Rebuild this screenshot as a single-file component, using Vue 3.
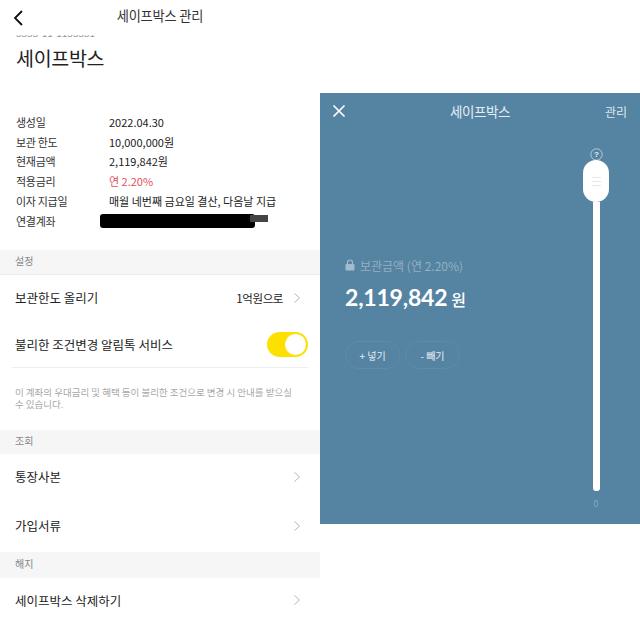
<script setup>
const infoRows = [
  { label: '생성일', value: '2022.04.30' },
  { label: '보관 한도', value: '10,000,000원' },
  { label: '현재금액', value: '2,119,842원' },
  { label: '적용금리', value: '연 2.20%', red: true },
  { label: '이자 지급일', value: '매월 네번째 금요일 결산, 다음날 지급' },
  { label: '연결계좌', hidden: true }
]
</script>

<template>
  <div class="page">
    <div class="manage">
      <div class="topbar">
        <svg class="back" width="12" height="18" viewBox="0 0 12 18" fill="none" stroke="#111" stroke-width="1.8">
          <path d="M10 2 L3 9 L10 16" />
        </svg>
        <span class="topbar-title">세이프박스 관리</span>
      </div>
      <div class="cut-number"><span>3333-11-1133331</span></div>
      <h1 class="box-title">세이프박스</h1>

      <div class="info">
        <div v-for="row in infoRows" :key="row.label" class="info-row">
          <div class="info-label">{{ row.label }}</div>
          <div v-if="row.hidden" class="scribble"></div>
          <div v-else class="info-value" :class="{ red: row.red }">{{ row.value }}</div>
        </div>
      </div>

      <div class="band band-first">설정</div>
      <div class="menu-row row-limit">
        <span>보관한도 올리기</span>
        <span class="menu-right">
          <span class="menu-value">1억원으로</span>
          <svg class="chev" width="8" height="12" viewBox="0 0 8 12" fill="none" stroke="#b5b5b5" stroke-width="1">
            <path d="M1.5 1.5 L6.5 6 L1.5 10.5" />
          </svg>
        </span>
      </div>
      <div class="menu-row row-alert">
        <span>불리한 조건변경 알림톡 서비스</span>
        <span class="toggle"><span class="knob"></span></span>
      </div>
      <div class="divider"></div>
      <p class="notice">이 계좌의 우대금리 및 혜택 등이 불리한 조건으로 변경 시 안내를 받으실<br />수 있습니다.</p>

      <div class="band">조회</div>
      <div class="menu-row row-copy">
        <span>통장사본</span>
        <svg class="chev" width="8" height="12" viewBox="0 0 8 12" fill="none" stroke="#b5b5b5" stroke-width="1">
          <path d="M1.5 1.5 L6.5 6 L1.5 10.5" />
        </svg>
      </div>
      <div class="menu-row row-docs">
        <span>가입서류</span>
        <svg class="chev" width="8" height="12" viewBox="0 0 8 12" fill="none" stroke="#b5b5b5" stroke-width="1">
          <path d="M1.5 1.5 L6.5 6 L1.5 10.5" />
        </svg>
      </div>
      <div class="band band-third">해지</div>
      <div class="menu-row row-delete">
        <span>세이프박스 삭제하기</span>
        <svg class="chev" width="8" height="12" viewBox="0 0 8 12" fill="none" stroke="#b5b5b5" stroke-width="1">
          <path d="M1.5 1.5 L6.5 6 L1.5 10.5" />
        </svg>
      </div>
    </div>

    <div class="box-panel">
      <div class="panel-top">
        <svg width="14" height="14" viewBox="0 0 14 14" fill="none" stroke="#fff" stroke-width="1.7">
          <path d="M1.5 1.5 L12.5 12.5 M12.5 1.5 L1.5 12.5" />
        </svg>
        <span class="panel-title">세이프박스</span>
        <span class="panel-manage">관리</span>
      </div>
      <div class="panel-body">
        <div class="balance">
          <div class="balance-label">
            <svg width="10" height="12" viewBox="0 0 10 12">
              <path d="M2.5 5 V3.5 a2.5 2.5 0 0 1 5 0 V5" fill="none" stroke="#a3bccd" stroke-width="1.2" />
              <rect x="0.5" y="5" width="9" height="6.5" rx="1" fill="#a3bccd" />
            </svg>
            <span>보관금액 (연 2.20%)</span>
          </div>
          <div class="balance-amount">2,119,842<span class="won">원</span></div>
          <div class="balance-actions">
            <span class="pill">+ 넣기</span>
            <span class="pill">- 빼기</span>
          </div>
        </div>
        <div class="slider">
          <svg width="13" height="13" viewBox="0 0 13 13" class="help">
            <circle cx="6.5" cy="6.5" r="5.7" fill="none" stroke="#c4d5e0" stroke-width="0.9" />
            <text x="6.5" y="9.3" text-anchor="middle" font-size="8" font-weight="700" fill="#e4edf2" font-family="Liberation Sans, sans-serif">?</text>
          </svg>
          <div class="thumb">
            <i></i><i></i><i></i>
          </div>
          <div class="track"></div>
          <div class="zero">0</div>
        </div>
      </div>
    </div>
  </div>
</template>

<style scoped>
.page {
  display: flex;
  width: 640px;
  height: 617px;
  overflow: hidden;
  background: #fff;
  font-family: "Noto Sans CJK KR", "Noto Sans", sans-serif;
}

.manage {
  width: 320px;
  flex-shrink: 0;
  color: #222;
}

.topbar {
  height: 33px;
  position: relative;
  display: flex;
  align-items: center;
  justify-content: center;
  padding-bottom: 2px;
  box-sizing: border-box;
}

.back {
  position: absolute;
  left: 12px;
  top: 9px;
}

.topbar-title {
  font-size: 13.2px;
  color: #333;
  letter-spacing: -0.15px;
}

.cut-number {
  height: 3px;
  margin-top: 2px;
  overflow: hidden;
  padding-left: 16px;
  display: flex;
  align-items: flex-end;
  font-size: 10px;
  line-height: 10px;
  color: #999;
}

.box-title {
  margin: 8px 0 0 16px;
  height: 24px;
  line-height: 24px;
  font-size: 19.5px;
  font-weight: 400;
  color: #222;
  letter-spacing: -0.3px;
}

.info {
  margin-top: 42px;
  padding-left: 16px;
  font-size: 11px;
}

.info-row {
  display: flex;
  height: 19.75px;
  align-items: center;
}

.info-label {
  width: 93px;
  color: #333;
  letter-spacing: -0.3px;
}

.info-value {
  color: #222;
}

.red {
  color: #e0505a;
}

.scribble {
  position: relative;
  width: 155px;
  height: 14px;
  margin-left: -9px;
  background: #000;
  border-radius: 3px;
}

.scribble::after {
  content: '';
  position: absolute;
  left: 150px;
  top: 1px;
  width: 18px;
  height: 7px;
  background: #444;
}

.band {
  background: #f6f6f6;
  height: 24px;
  line-height: 22px;
  padding-left: 15px;
  font-size: 10px;
  color: #888;
}

.band-first {
  margin-top: 19px;
  box-shadow: 0 1px 0 #ececec;
}

.band-third {
  height: 26px;
  line-height: 24px;
}

.menu-row {
  display: flex;
  align-items: center;
  justify-content: space-between;
  padding: 0 19px 0 15px;
  font-size: 12.5px;
  color: #222;
}

.row-limit {
  height: 46px;
  margin-top: 1px;
}

.row-alert {
  height: 44px;
  padding-top: 2px;
  padding-right: 12px;
}

.divider {
  height: 1px;
  margin: 0 12px;
  background: #eeeeee;
}

.row-copy {
  height: 46px;
}

.row-docs {
  height: 52px;
}

.row-delete {
  height: 45px;
}

.menu-right {
  display: flex;
  align-items: center;
  gap: 10px;
}

.menu-value {
  font-size: 11.5px;
  letter-spacing: -0.4px;
}

.toggle {
  width: 41px;
  height: 25px;
  border-radius: 13px;
  background: #fde000;
  display: flex;
  align-items: center;
  justify-content: flex-end;
  padding-right: 2px;
  box-sizing: border-box;
}

.knob {
  width: 21px;
  height: 21px;
  border-radius: 50%;
  background: #fff;
}

.notice {
  margin: 0;
  padding: 18px 0 0 15px;
  height: 62px;
  box-sizing: border-box;
  font-size: 9.5px;
  line-height: 12px;
  color: #a8a8a8;
}

.box-panel {
  width: 320px;
  height: 431px;
  margin-top: 93px;
  background: #5583a2;
  color: #fff;
  display: flex;
  flex-direction: column;
}

.panel-top {
  height: 36px;
  display: flex;
  align-items: center;
  justify-content: space-between;
  padding: 0 13px 0 12px;
  position: relative;
}

.panel-title {
  position: absolute;
  left: 0;
  right: 0;
  text-align: center;
  font-size: 13.5px;
  color: #e6eef3;
  letter-spacing: -0.4px;
}

.panel-manage {
  font-size: 12px;
  color: #dfe9ef;
}

.panel-body {
  flex: 1;
  display: flex;
  justify-content: space-between;
  padding-right: 31px;
}

.balance {
  padding: 128px 0 0 25px;
}

.balance-label {
  display: flex;
  align-items: center;
  gap: 5px;
  font-size: 12px;
  color: #93b0c4;
  height: 16px;
}

.balance-amount {
  margin-top: 10px;
  font-size: 23px;
  line-height: 28px;
  font-weight: 700;
  font-family: "Lato", "Noto Sans CJK KR", sans-serif;
  letter-spacing: -0.2px;
}

.won {
  font-family: "Noto Sans CJK KR", sans-serif;
  font-size: 16px;
  font-weight: 500;
  margin-left: 4px;
}

.balance-actions {
  display: flex;
  gap: 5px;
  margin-top: 28px;
}

.pill {
  width: 55px;
  height: 28px;
  box-sizing: border-box;
  border: 1px solid #6289a6;
  border-radius: 14px;
  display: flex;
  align-items: center;
  justify-content: center;
  font-size: 10px;
  color: #e6eef3;
}

.slider {
  width: 26px;
  display: flex;
  flex-direction: column;
  align-items: center;
  padding-top: 19px;
}

.help {
  flex-shrink: 0;
  margin-bottom: -1px;
}

.thumb {
  width: 26px;
  height: 42px;
  border-radius: 13px;
  background: #fff;
  display: flex;
  flex-direction: column;
  align-items: center;
  justify-content: center;
  gap: 3px;
  flex-shrink: 0;
}

.thumb i {
  width: 9px;
  height: 1px;
  background: #e8e8e8;
}

.track {
  width: 7px;
  height: 289px;
  background: #fff;
  border-radius: 0 0 3px 3px;
}

.zero {
  margin-top: 6px;
  font-size: 9px;
  color: #86a9c0;
}
</style>

<style>
html,
body {
  margin: 0;
  overflow: hidden;
}
</style>
